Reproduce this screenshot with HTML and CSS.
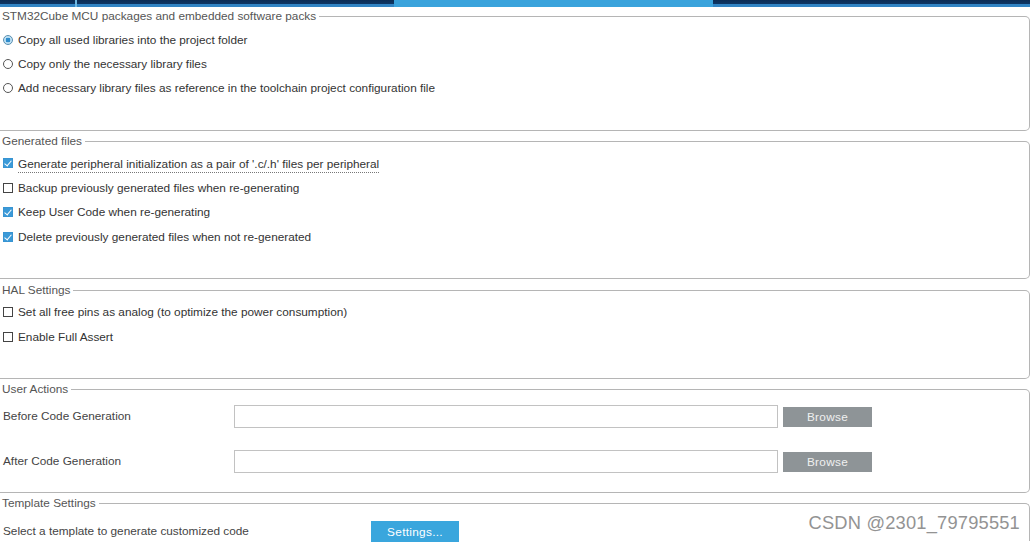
FILE: index.html
```html
<!DOCTYPE html>
<html>
<head>
<meta charset="utf-8">
<link rel="stylesheet" href="styles.css">
</head>
<body>
<div class="tabs">
  <div class="tab dark t1"></div>
  <div class="tab sep"></div>
  <div class="tab dark t2"></div>
  <div class="tab light t3"></div>
  <div class="tab dark t4"></div>
</div>

<fieldset class="group g1">
  <legend>STM32Cube MCU packages and embedded software packs</legend>
  <div class="content c1">
    <label class="row"><span class="radio on"></span>Copy all used libraries into the project folder</label>
    <label class="row"><span class="radio"></span>Copy only the necessary library files</label>
    <label class="row"><span class="radio"></span>Add necessary library files as reference in the toolchain project configuration file</label>
  </div>
</fieldset>

<fieldset class="group g2">
  <legend>Generated files</legend>
  <div class="content c2">
    <label class="row"><span class="check on"></span><span class="dotted">Generate peripheral initialization as a pair of '.c/.h' files per peripheral</span></label>
    <label class="row"><span class="check"></span>Backup previously generated files when re-generating</label>
    <label class="row"><span class="check on"></span>Keep User Code when re-generating</label>
    <label class="row"><span class="check on"></span>Delete previously generated files when not re-generated</label>
  </div>
</fieldset>

<fieldset class="group g3">
  <legend>HAL Settings</legend>
  <div class="content c3">
    <label class="row"><span class="check"></span>Set all free pins as analog (to optimize the power consumption)</label>
    <label class="row"><span class="check"></span>Enable Full Assert</label>
  </div>
</fieldset>

<fieldset class="group g4">
  <legend>User Actions</legend>
  <div class="content c4">
    <div class="action">
      <span class="alabel">Before Code Generation</span>
      <span class="input"></span>
      <span class="btn gray">Browse</span>
    </div>
    <div class="action second">
      <span class="alabel">After Code Generation</span>
      <span class="input"></span>
      <span class="btn gray">Browse</span>
    </div>
  </div>
</fieldset>

<fieldset class="group g5">
  <legend>Template Settings</legend>
  <div class="content c5">
    <div class="action">
      <span class="tlabel">Select a template to generate customized code</span>
      <span class="btn blue">Settings...</span>
    </div>
  </div>
</fieldset>

<div class="watermark">CSDN @2301_79795551</div>
</body>
</html>
```

FILE: styles.css
```css
html, body {
  margin: 0;
  padding: 0;
  background: #fff;
  overflow: hidden;
}
body {
  width: 1035px;
  height: 543px;
  position: relative;
  font-family: "Liberation Sans", Arial, sans-serif;
  font-size: 11.8px;
  color: #333;
}

.tabs {
  display: flex;
  height: 7px;
  width: 1030px;
  margin-bottom: 2px;
}
.tab.dark {
  background: linear-gradient(#0b2c54 0, #0d3766 60%, #3184c4 60%, #3184c4 100%);
}
.tab.light { background: #3aa3dc; }
.tab.sep { width: 2px; background: #6fb8e2; }
.t1 { width: 75px; }
.t2 { width: 317px; }
.t3 { width: 319px; }
.t4 { width: 317px; }

.group {
  margin: 0 5px 0 0;
  padding: 0;
  border: 1px solid #b5b5b5;
  border-left: 0;
  border-radius: 0 5px 5px 0;
  min-width: 0;
}
.group legend {
  padding: 0 3px 0 2px;
  margin: 0;
  line-height: 14px;
  color: #555;
}
.g2 { margin-top: 3px; }
.g3 { margin-top: 4px; }
.g4 { margin-top: 3px; }
.g5 { margin-top: 3px; height: 44px; border-bottom: 0; border-radius: 0 5px 0 0; }

.content { box-sizing: border-box; }
.c1 { height: 107px; padding-top: 5px; }
.c2 { height: 130px; padding-top: 3px; }
.c3 { height: 81px; padding-top: 3px; }
.c4 { height: 96px; padding-top: 9px; }
.c5 { padding-top: 9px; }

.row {
  display: flex;
  align-items: center;
  height: 24.5px;
  white-space: nowrap;
}
.c1 .row { height: 24px; }

.radio {
  box-sizing: border-box;
  width: 10px;
  height: 10px;
  border: 1px solid #555;
  border-radius: 50%;
  margin: 0 5px 0 3px;
  flex: none;
  background: #fff;
}
.radio.on {
  border-color: #5a8fb0;
  background: radial-gradient(circle, #2e8ccc 0 2.2px, #bfe1f4 2.6px 100%);
}

.check {
  box-sizing: border-box;
  width: 10px;
  height: 10px;
  border: 1px solid #444;
  margin: 0 5px 0 3px;
  flex: none;
  background: #fff;
  position: relative;
}
.check.on {
  border-color: #3894d2;
  background: #3b9ad8;
}
.check.on::after {
  content: "";
  position: absolute;
  left: 2px;
  top: 0px;
  width: 3px;
  height: 6px;
  border: solid #fff;
  border-width: 0 1.6px 1.6px 0;
  transform: rotate(40deg);
}

.dotted {
  border-bottom: 1px dotted #777;
  padding-bottom: 1px;
  margin-top: 3px;
}

.action {
  display: flex;
  align-items: center;
  height: 23px;
}
.action.second { margin-top: 22px; }
.alabel {
  width: 234px;
  padding-left: 3px;
  padding-bottom: 2px;
  box-sizing: border-box;
  flex: none;
  color: #444;
}
.input {
  box-sizing: border-box;
  width: 544px;
  height: 23px;
  border: 1px solid #c2c2c2;
  background: #fff;
  flex: none;
}
.btn {
  display: flex;
  align-items: center;
  justify-content: center;
  flex: none;
  letter-spacing: 0.3px;
}
.btn.gray {
  width: 89px;
  height: 20px;
  margin-left: 5px;
  background: #8e9497;
  color: #eef0f0;
}
.tlabel {
  width: 371px;
  padding-left: 3px;
  box-sizing: border-box;
  flex: none;
  color: #444;
}
.btn.blue {
  width: 88px;
  height: 21px;
  margin-top: 2px;
  background: #3aa6dd;
  color: #fff;
}

.watermark {
  position: absolute;
  right: 15px;
  bottom: 9px;
  font-size: 18.3px;
  color: #939393;
  letter-spacing: 0.2px;
}
```
